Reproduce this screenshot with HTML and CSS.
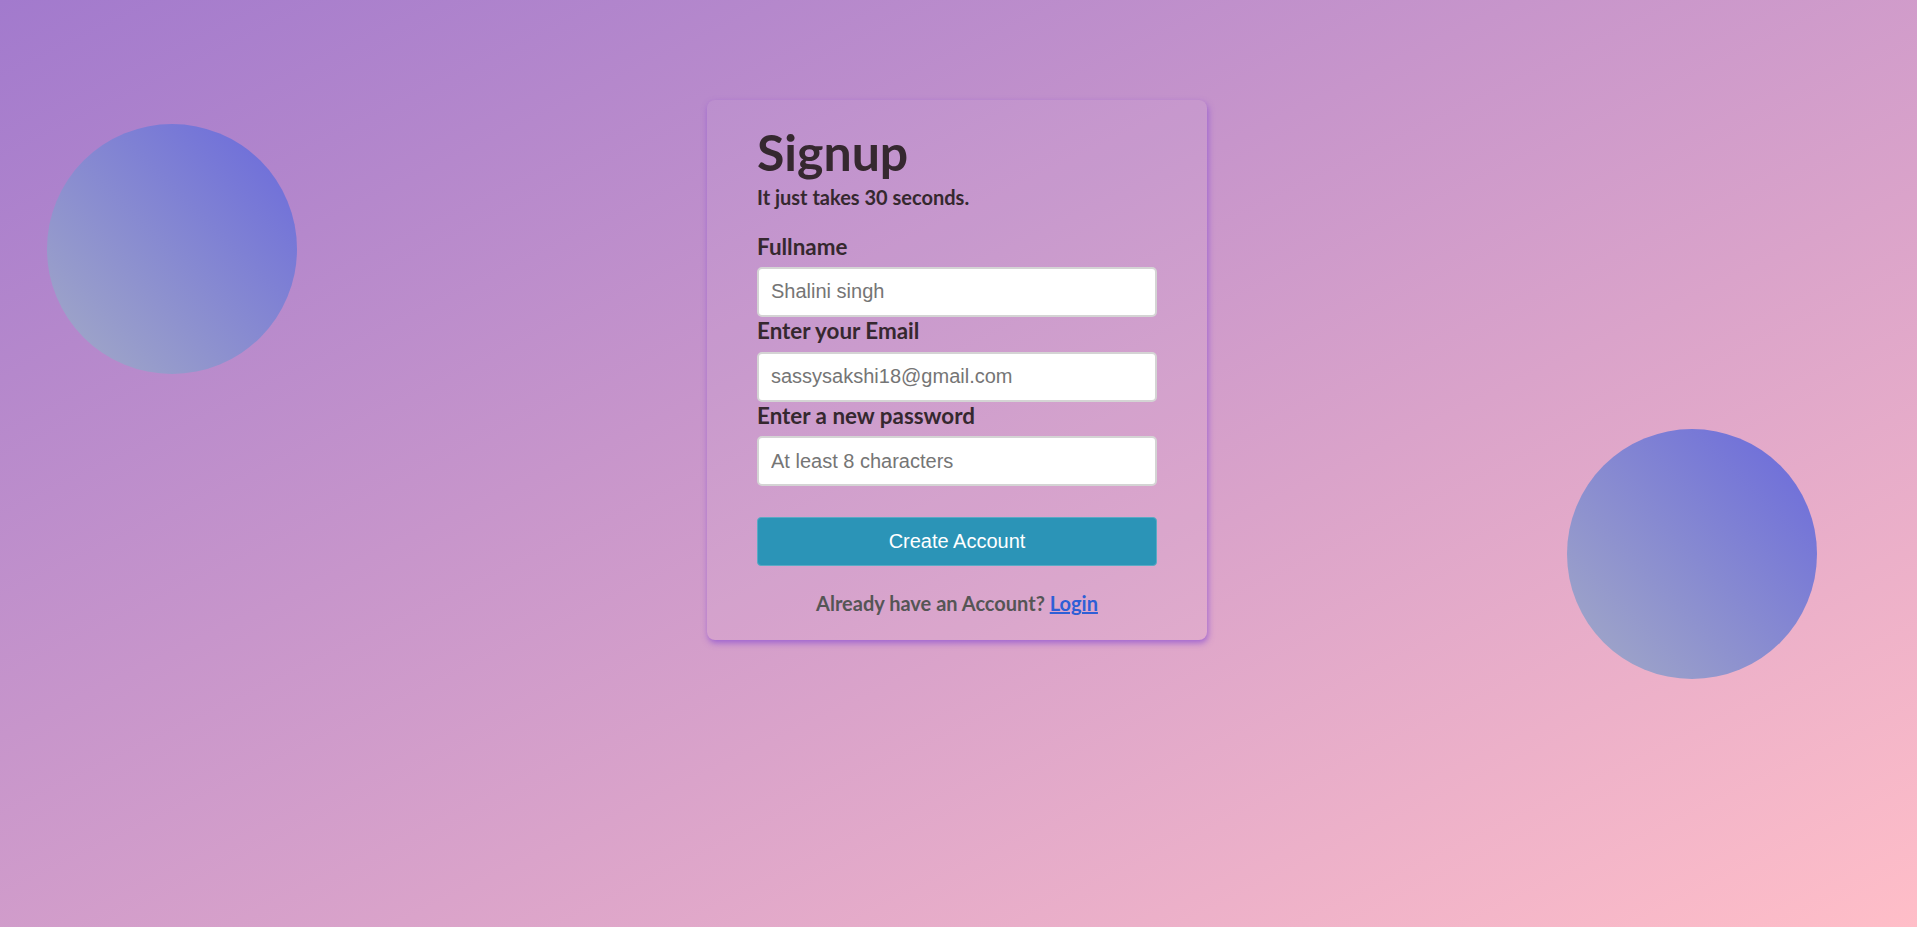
FILE: index.html
```html
<!DOCTYPE html>
<html lang="en">
<head>
<meta charset="utf-8">
<title>Signup</title>
<link rel="stylesheet" href="styles.css">
</head>
<body>
<div class="circle circle-one"></div>
<div class="circle circle-two"></div>
<main class="page">
  <section class="card">
    <h1 class="title">Signup</h1>
    <p class="subtitle">It just takes 30 seconds.</p>
    <form class="form">
      <label class="label" for="fullname">Fullname</label>
      <input class="field" id="fullname" type="text" placeholder="Shalini singh">
      <label class="label" for="email">Enter your Email</label>
      <input class="field" id="email" type="email" placeholder="sassysakshi18@gmail.com">
      <label class="label" for="password">Enter a new password</label>
      <input class="field" id="password" type="password" placeholder="At least 8 characters">
      <button class="submit" type="button">Create Account</button>
    </form>
    <p class="footer">Already have an Account? <a class="login" href="#">Login</a></p>
  </section>
</main>
</body>
</html>
```
FILE: styles.css
```css
* { box-sizing: border-box; }
html, body { margin: 0; height: 100%; }
body {
  position: relative;
  overflow: hidden;
  background: linear-gradient(to bottom right, #a27acd, #ffbec8);
  font-family: "Lato", "Liberation Sans", sans-serif;
  color: #35282f;
}
.circle {
  position: absolute;
  width: 250px;
  height: 250px;
  border-radius: 50%;
  background: linear-gradient(45deg, #a4abc6, #6968dc);
}
.circle-one { left: 47px; top: 124px; }
.circle-two { left: 1567px; top: 429px; }
.page {
  position: relative;
  display: flex;
  justify-content: center;
  padding: 100px 3px 0 0;
}
.card {
  width: 500px;
  padding: 22px 50px 25px;
  border-radius: 8px;
  background: rgba(255, 255, 255, 0.05);
  box-shadow: 1px 3px 6px rgba(140, 80, 210, 0.75);
  display: flex;
  flex-direction: column;
}
.title {
  margin: 0;
  font-size: 50px;
  font-weight: 700;
  line-height: 1.2;
}
.subtitle {
  margin: 3px 0 0;
  font-size: 20px;
  font-weight: 700;
  line-height: 1.2;
}
.form {
  display: flex;
  flex-direction: column;
  margin-top: 24.6px;
}
.label {
  font-size: 22.4px;
  font-weight: 700;
  line-height: 1.2;
  margin-bottom: 6.5px;
}
.field {
  height: 50px;
  width: 100%;
  margin: 0 0 1.2px;
  padding: 0 12px;
  border: 2px solid #d4d4d4;
  border-radius: 5px;
  background: #fff;
  font-family: "Liberation Sans", Arial, sans-serif;
  font-size: 20px;
  color: #333;
  outline: none;
}
.field::placeholder { color: #757575; }
.submit {
  margin-top: 30.2px;
  height: 49px;
  width: 100%;
  border: 1px solid #5aa9c4;
  border-radius: 4px;
  background: #2b94b7;
  color: #fff;
  font-family: "Liberation Sans", Arial, sans-serif;
  font-size: 20px;
  cursor: pointer;
}
.footer {
  margin: 25px 0 0;
  text-align: center;
  font-size: 20px;
  font-weight: 700;
  line-height: 24px;
  color: #555;
}
.login {
  color: #2e5fd6;
  text-decoration: underline;
}
```
